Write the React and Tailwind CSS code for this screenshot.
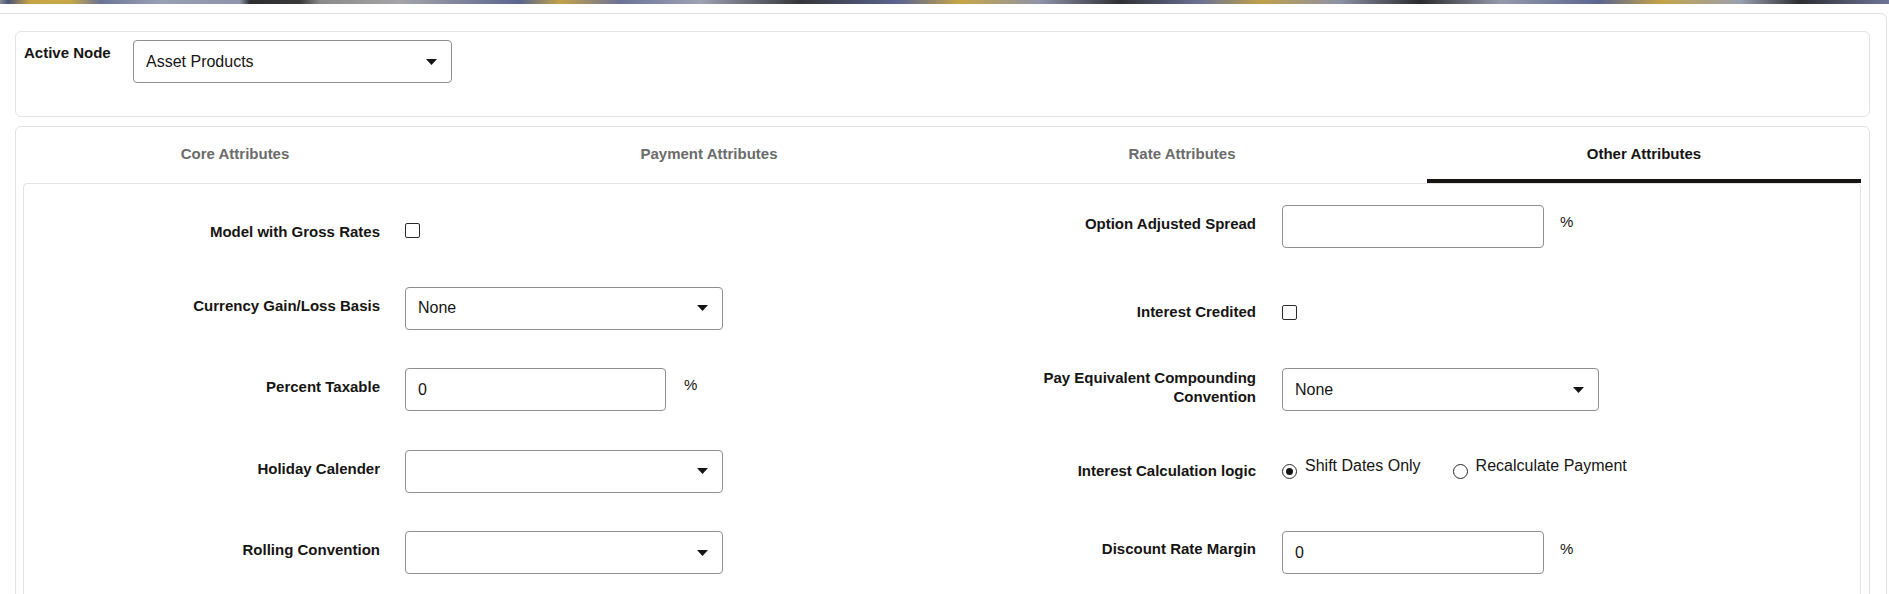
import { useState } from 'react';

const tabs = [
  { label: 'Core Attributes', w: 'w-[438px]' },
  { label: 'Payment Attributes', w: 'w-[510px]' },
  { label: 'Rate Attributes', w: 'w-[436px]' },
  { label: 'Other Attributes', w: 'w-[434px]' },
];

function Caret() {
  return (
    <svg width="11" height="6" viewBox="0 0 11 6" className="shrink-0">
      <path d="M0 0h11L5.5 6z" fill="#161513" />
    </svg>
  );
}

function Select({ value, w = 'w-[318px]' }) {
  return (
    <div className={`${w} h-[43px] border border-[#8f8f8f] rounded-[4px] flex items-center justify-between pl-3 pr-[14px] text-[16px] text-[#161513] bg-white`}>
      <span>{value}</span>
      <Caret />
    </div>
  );
}

function TextInput({ value, w = 'w-[262px]' }) {
  return (
    <div className={`${w} h-[43px] border border-[#8f8f8f] rounded-[4px] flex items-center pl-3 text-[16px] text-[#161513] bg-white`}>
      {value}
    </div>
  );
}

// the % sign sits near the top of the input, not centred on it
function Percent({ top = 'mt-[6px]', ml = '-ml-[10px]' }) {
  return <span className={`${ml} self-start ${top} text-[15px] text-[#161513]`}>%</span>;
}

function Checkbox({ mt = 'mt-[6px]' }) {
  return <span className={`${mt} w-[15px] h-[15px] border border-[#2b2b2b] rounded-[2px] bg-white`} />;
}

function Radio({ checked }) {
  return (
    <span className="w-[15px] h-[15px] rounded-full border border-[#2b2b2b] flex items-center justify-center shrink-0">
      {checked && <span className="w-[7px] h-[7px] rounded-full bg-[#161513]" />}
    </span>
  );
}

function Row({ label, labelW, gap, shift = '-translate-y-[3px]', children }) {
  return (
    <div className={`flex items-center h-[43px] ${gap}`}>
      <div className={`${labelW} ${shift} shrink-0 text-right text-[15px] font-bold text-[#161513] leading-[19px]`}>{label}</div>
      {children}
    </div>
  );
}

export default function App() {
  const [active] = useState(3);

  const L = { labelW: 'w-[356px]', gap: 'gap-[25px]' };
  const R = { labelW: 'w-[315px]', gap: 'gap-[26px]' };

  return (
    <div className="w-[1889px] h-[594px] overflow-hidden bg-white font-['Liberation_Sans',Arial,sans-serif]">
      {/* banner strip */}
      <div className="h-[4px] bg-[linear-gradient(90deg,#8a8c92_0px,#4b5478_8px,#c7a444_30px,#c9a848_70px,#6c7596_100px,#9aa0b4_160px,#8d93a8_240px,#2e2e30_250px,#3a3a3c_300px,#8a8a8a_320px,#a5a5a8_400px,#5a6590_520px,#c3a24a_560px,#6b7398_620px,#9ea2b2_700px,#35363a_800px,#5c6591_900px,#c8a648_960px,#8e93a8_1040px,#2f3033_1120px,#6a7296_1200px,#bfa04a_1260px,#8c91a6_1340px,#2a2b2e_1420px,#959aab_1500px,#5b6590_1600px,#c4a347_1660px,#9aa0b0_1740px,#2d2e31_1800px,#6e7699_1889px)]" />

      {/* outer panel */}
      <div className="-ml-[6px] mr-[2px] mt-[9px] border border-[#e1e1e1] rounded-[6px] pt-[17px] pl-[20px] pr-[16px] h-[700px]">
        {/* active node card */}
        <div className="h-[86px] border border-[#e3e3e3] rounded-[6px] pt-[8px] pl-[8px] flex items-start">
          <div className="w-[109px] pt-[4px] text-[15px] font-bold text-[#161513] leading-[18px]">Active Node</div>
          <Select value="Asset Products" w="w-[319px]" />
        </div>

        {/* tabs card */}
        <div className="mt-[9px] border border-[#e3e3e3] rounded-[6px] h-[600px]">
          <div className="flex h-[56px]">
            {tabs.map((t, i) => (
              <div
                key={t.label}
                className={`${t.w} ${i === 3 ? 'ml-[27px]' : ''} flex flex-col`}
              >
                <div className={`flex-1 flex items-center justify-center pt-[2px] text-[15px] font-bold ${i === active ? 'text-[#161513]' : 'text-[#6b6b6b]'}`}>
                  {t.label}
                </div>
                <div className={`h-[4px] ${i === active ? 'bg-[#161513]' : ''}`} />
              </div>
            ))}
          </div>

          {/* content panel */}
          <div className="ml-[7px] mr-[8px] border border-[#e3e3e3] rounded-[4px] h-[500px] pt-[21px]">
            <div className="grid grid-cols-[917px_1fr] gap-y-[38.5px]">
              <Row label="Model with Gross Rates" {...L} shift="translate-y-[5px]">
                <Checkbox mt="mt-[7px]" />
              </Row>
              <Row label="Option Adjusted Spread" {...R}>
                <TextInput value="" />
                <Percent />
              </Row>

              <Row label="Currency Gain/Loss Basis" {...L}>
                <Select value="None" />
              </Row>
              <Row label="Interest Credited" {...R} shift="translate-y-[3px]">
                <Checkbox mt="mt-[8px]" />
              </Row>

              <Row label="Percent Taxable" {...L}>
                <TextInput value="0" w="w-[261px]" />
                <Percent ml="-ml-[7px]" />
              </Row>
              <Row label={<>Pay Equivalent Compounding<br />Convention</>} {...R}>
                <Select value="None" w="w-[317px]" />
              </Row>

              <Row label="Holiday Calender" {...L}>
                <Select value="" />
              </Row>
              <Row label="Interest Calculation logic" {...R} shift="-translate-y-[1px]">
                <div className="flex items-center text-[16px] text-[#161513]">
                  <Radio checked />
                  <span className="ml-[8px] -mt-[10px]">Shift Dates Only</span>
                  <span className="ml-[32px]"><Radio /></span>
                  <span className="ml-[8px] -mt-[10px]">Recalculate Payment</span>
                </div>
              </Row>

              <Row label="Rolling Convention" {...L}>
                <Select value="" />
              </Row>
              <Row label="Discount Rate Margin" {...R} shift="-translate-y-[4px]">
                <TextInput value="0" />
                <Percent top="mt-[7px]" />
              </Row>
            </div>
          </div>
        </div>
      </div>
    </div>
  );
}
